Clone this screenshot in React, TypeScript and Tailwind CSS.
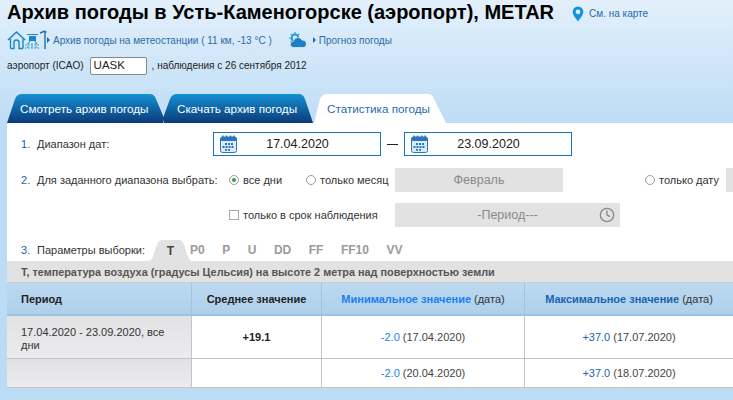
import { Clock } from "lucide-react";

const Arrow = () => <span className="mr-[3px] inline-block h-0 w-0 border-y-[3px] border-l-[3px] border-y-transparent border-l-[#1f6cab]" />;

const HomeIcon = () => (
  <svg width="40" height="20" viewBox="0 0 40 20" fill="none" className="shrink-0">
    <path d="M1 10 L9.5 2 L18 10" stroke="#1a86c8" strokeWidth="1.6" />
    <path d="M3.5 9 V18.5 M16 9 V18.5 M3.5 18.5 H7 V12.5 a2.5 2.5 0 0 1 5 0 V18.5 H16" stroke="#1a86c8" strokeWidth="1.4" />
    <rect x="22" y="6" width="7" height="5" fill="#1a86c8" />
    <path d="M20 4.5 H31 M23 11 L21 14 M28 11 L30 14" stroke="#1a86c8" />
    <path d="M18 15 H32 M18 18 H32 M21 13 V19 M25 13 V19 M29 13 V19" stroke="#4aa3d8" strokeWidth="1.2" strokeDasharray="2 1" />
    <path d="M33 3 L38 1 M38 1 V19 M38 2 H39.5" stroke="#1a6fb0" strokeWidth="1.4" />
  </svg>
);

const CloudIcon = () => (
  <svg width="20" height="16" viewBox="0 0 20 16" className="shrink-0">
    <circle cx="7" cy="6" r="3.4" fill="none" stroke="#1d94d8" strokeWidth="2" />
    <path d="M7 0 V1.5 M1 6 H2.4 M2.8 1.8 L3.8 2.8 M11.2 1.8 L10.2 2.8 M2.8 10.2 L3.8 9.2" stroke="#1d94d8" strokeWidth="1.2" />
    <path d="M5.5 15.5 a3.2 3.2 0 0 1 0 -6.4 a4.6 4.6 0 0 1 8.6 -1 a3.8 3.8 0 0 1 1.6 7.4 Z" fill="#1a7fc4" stroke="#fff" strokeWidth="0.6" />
  </svg>
);

const PinIcon = () => (
  <svg width="12" height="16" viewBox="0 0 12 16" className="shrink-0">
    <path fillRule="evenodd" d="M6 0.5 a5.3 5.3 0 0 1 5.3 5.3 C11.3 9.3 8 12.5 6 15.5 C4 12.5 0.7 9.3 0.7 5.8 A5.3 5.3 0 0 1 6 0.5 Z M6 3.4 a2.4 2.4 0 1 0 0 4.8 a2.4 2.4 0 0 0 0 -4.8 Z" fill="#1093dc" />
  </svg>
);

const CalendarIcon = () => (
  <svg width="17" height="18" viewBox="0 0 17 18" className="shrink-0">
    <rect x="0.5" y="2" width="16" height="15.5" rx="2" fill="#dcebf8" stroke="#2a74c0" />
    <rect x="0.5" y="2" width="16" height="4" rx="1.5" fill="#2a74c0" />
    <path d="M3 0.5 V3 M6.5 0.5 V3 M10.5 0.5 V3 M14 0.5 V3" stroke="#2a74c0" strokeWidth="1.4" />
    <path d="M5 8 H7 V10 H5Z M8 8 H10 V10 H8Z M11 8 H13 V10 H11Z M2.5 11 H4.5 V13 H2.5Z M5.5 11 H7.5 V13 H5.5Z M8.5 11 H10.5 V13 H8.5Z M11.5 11 H13.5 V13 H11.5Z M5 14 H7 V15.7 H5Z M8 14 H10 V15.7 H8Z" fill="#2a74c0" />
  </svg>
);

const DateBox = ({ value }: { value: string }) => (
  <div className="flex h-6 w-[168px] shrink-0 items-center border border-[#1c72b8] bg-white pl-[6px]">
    <CalendarIcon />
    <span className="flex-1 pr-[22px] text-center text-[12.5px] text-[#222]">{value}</span>
  </div>
);

const Radio = ({ checked, label }: { checked?: boolean; label: string }) => (
  <label className="flex items-center gap-[4px] text-[11px] text-[#333]">
    <span className="flex h-[10px] w-[10px] shrink-0 items-center justify-center rounded-full border border-[#999] bg-white">
      {checked && <span className="h-[4px] w-[4px] rounded-full bg-[#2f9e44]" />}
    </span>
    {label}
  </label>
);

const Num = ({ n }: { n: number }) => <span className="w-4 shrink-0 text-[11px] text-[#1a5fa8]">{n}.</span>;

const params = ["P0", "P", "U", "DD", "FF", "FF10", "VV"];

const rows = [
  { min: "-2.0", minDate: "(17.04.2020)", max: "+37.0", maxDate: "(17.07.2020)" },
  { min: "-2.0", minDate: "(20.04.2020)", max: "+37.0", maxDate: "(18.07.2020)" },
];

export default function App() {
  return (
    <div className="h-[400px] w-[733px] overflow-hidden bg-gradient-to-b from-[#e3f0fb] from-0% to-[#bcdcf6] to-[32%] font-['Liberation_Sans',Arial,sans-serif]">
      <div className="pl-[7px]">
        <div className="flex h-[24px] items-center">
          <h1 className="text-[20px] leading-[24px] font-bold whitespace-nowrap text-black">Архив погоды в Усть-Каменогорске (аэропорт), METAR</h1>
          <div className="mt-[3px] ml-[18px] flex items-center gap-[5px] text-[10px] text-[#1f6cab]">
            <PinIcon />
            См. на карте
          </div>
        </div>

        <div className="mt-[6px] flex h-[20px] items-center text-[10px] text-[#2a6ca8]">
          <HomeIcon />
          <span className="flex items-center">
            <Arrow />
            Архив погоды на метеостанции ( 11 км, -13 °C )
          </span>
          <span className="ml-[16px] flex items-center gap-[5px]">
            <CloudIcon />
            <span className="flex items-center">
              <Arrow />
              Прогноз погоды
            </span>
          </span>
        </div>

        <div className="mt-[6px] flex h-[19px] items-center text-[10px] text-[#222]">
          <span>аэропорт (ICAO)</span>
          <span className="mr-[5px] ml-[6px] flex h-[18px] w-[57px] items-center rounded-[2px] border border-[#888] bg-white pl-[3px] text-[11.5px]">UASK</span>
          <span>, наблюдения с 26 сентября 2012</span>
        </div>

        <div className="mt-[19px] flex h-[29px] items-end">
          <div className="flex h-[29px] w-[157px] items-center bg-gradient-to-b from-[#1592d4] to-[#0c3a7a] pl-[13px] text-[11.7px] text-white [clip-path:path('M0_29_L8_5_Q10_0_15_0_H143_Q147_0_149_5_L157_24_L156_29_Z')]">Смотреть архив погоды</div>
          <div className="-ml-[1px] flex h-[29px] w-[150px] items-center bg-gradient-to-b from-[#1592d4] to-[#0c3a7a] pl-[14px] text-[11.7px] text-white [clip-path:path('M0_24_L7_5_Q9_0_14_0_H136_Q140_0_142_5_L150_29_H1_Z')]">Скачать архив погоды</div>
          <div className="ml-[1px] flex h-[29px] w-[132px] items-center bg-white pl-[13px] text-[11.7px] text-[#2a6ca8] [clip-path:path('M0_29_L6_5_Q8_0_13_0_H114_Q118_0_120_5_L132_29_Z')]">Статистика погоды</div>
        </div>

        <div className="bg-white">
          <div className="flex h-[33px] items-end pl-[14px]">
            <div className="flex h-[24px] items-center">
              <Num n={1} />
              <span className="w-[176px] shrink-0 text-[11px] text-[#333]">Диапазон дат:</span>
              <DateBox value="17.04.2020" />
              <span className="mx-[6px] h-px w-[11px] bg-[#222]" />
              <DateBox value="23.09.2020" />
            </div>
          </div>

          <div className="mt-[12px] flex h-[24px] items-center pl-[14px] whitespace-nowrap">
            <Num n={2} />
            <span className="w-[176px] shrink-0 text-[11px] text-[#333]">Для заданного диапазона выбрать:</span>
            <div className="ml-[16px] w-[77px] shrink-0"><Radio checked label="все дни" /></div>
            <div className="w-[89px] shrink-0"><Radio label="только месяц" /></div>
            <div className="flex h-[24px] w-[168px] shrink-0 items-center justify-center bg-[#e2e2e2] text-[12.5px] text-[#8a8a8a]">Февраль</div>
            <div className="ml-[82px] w-[81px] shrink-0"><Radio label="только дату" /></div>
            <div className="h-[24px] w-[40px] shrink-0 bg-[#e2e2e2]" />
          </div>

          <div className="mt-[11px] flex h-[24px] items-center pl-[222px] whitespace-nowrap">
            <label className="flex w-[166px] shrink-0 items-center gap-[4px] text-[11px] text-[#333]">
              <span className="h-[10px] w-[10px] border border-[#aaa] bg-white" />
              только в срок наблюдения
            </label>
            <div className="relative flex h-[24px] w-[225px] shrink-0 items-center justify-center bg-[#e2e2e2] text-[12.5px] text-[#8a8a8a]">
              -Период---
              <Clock className="absolute right-[5px] h-[16px] w-[16px] text-[#888]" strokeWidth={2} />
            </div>
          </div>

          <div className="mt-[12px] flex h-[22px] items-center pl-[14px] whitespace-nowrap">
            <Num n={3} />
            <span className="w-[110px] shrink-0 text-[11px] text-[#333]">Параметры выборки:</span>
            <div className="-mb-[1px] flex h-[22px] w-[46px] shrink-0 items-center justify-center bg-[#e2e2e2] pl-[1px] text-[12px] font-bold text-[#444] [clip-path:path('M0_22_Q4_22_6_17_L10_5_Q12_0_17_0_H30_Q35_0_37_5_L41_17_Q43_22_46_22_Z')]">T</div>
            <div className="-ml-[3px] flex items-center gap-[17.5px] text-[12px] font-bold text-[#9a9a9a]">
              {params.map((p) => (
                <span key={p}>{p}</span>
              ))}
            </div>
          </div>

          <div className="flex h-[22px] items-center border-b border-[#ccc] bg-[#e2e2e2] pt-[1px] pl-[14px] text-[10.85px] font-bold text-[#555]">T, температура воздуха (градусы Цельсия) на высоте 2 метра над поверхностью земли</div>

          <div className="grid grid-cols-[185px_130px_203px_1fr] text-[11px]">
            <div className="flex h-[33px] items-center border-r border-b-2 border-r-[#a0c4e0] border-b-[#9cc3e0] bg-gradient-to-b from-[#bcd9f0] to-[#aed0ea] pt-[2px] pl-[14px] font-bold text-[#222]">Период</div>
            <div className="flex h-[33px] items-center justify-center border-r border-b-2 border-r-[#a0c4e0] border-b-[#9cc3e0] bg-gradient-to-b from-[#bcd9f0] to-[#aed0ea] pt-[2px] font-bold text-[#222]">Среднее значение</div>
            <div className="flex h-[33px] items-center justify-center gap-[3px] border-r border-b-2 border-r-[#a0c4e0] border-b-[#9cc3e0] bg-gradient-to-b from-[#bcd9f0] to-[#aed0ea] pt-[2px] text-[#333]">
              <b className="text-[#1a80f0]">Минимальное значение</b> (дата)
            </div>
            <div className="flex h-[33px] items-center justify-center gap-[3px] border-b-2 border-b-[#9cc3e0] bg-gradient-to-b from-[#bcd9f0] to-[#aed0ea] pt-[2px] text-[#333]">
              <b className="text-[#1a62b0]">Максимальное значение</b> (дата)
            </div>

            <div className="flex h-[43px] items-center border-r border-b border-[#c4c4c4] bg-gradient-to-b from-[#e2e2e4] to-[#ececee] px-[14px] pt-[3px] leading-[13px] text-[#333]">17.04.2020 - 23.09.2020, все дни</div>
            <div className="flex h-[43px] items-center justify-center border-r border-b border-[#c4c4c4] font-bold text-[#222]">+19.1</div>
            <div className="flex h-[43px] items-center justify-center gap-[3px] border-r border-b border-[#c4c4c4] text-[#444]">
              <span className="text-[#1a80f0]">{rows[0].min}</span> {rows[0].minDate}
            </div>
            <div className="flex h-[43px] items-center justify-center gap-[3px] border-b border-[#c4c4c4] text-[#444]">
              <span className="text-[#1a62b0]">{rows[0].max}</span> {rows[0].maxDate}
            </div>

            <div className="h-[29px] border-r border-b border-[#c4c4c4] bg-gradient-to-b from-[#e2e2e4] to-[#ececee]" />
            <div className="h-[29px] border-r border-b border-[#c4c4c4]" />
            <div className="flex h-[29px] items-center justify-center gap-[3px] border-r border-b border-[#c4c4c4] pt-[1px] text-[#444]">
              <span className="text-[#1a80f0]">{rows[1].min}</span> {rows[1].minDate}
            </div>
            <div className="flex h-[29px] items-center justify-center gap-[3px] border-b border-[#c4c4c4] pt-[1px] text-[#444]">
              <span className="text-[#1a62b0]">{rows[1].max}</span> {rows[1].maxDate}
            </div>
          </div>
        </div>
      </div>
    </div>
  );
}
